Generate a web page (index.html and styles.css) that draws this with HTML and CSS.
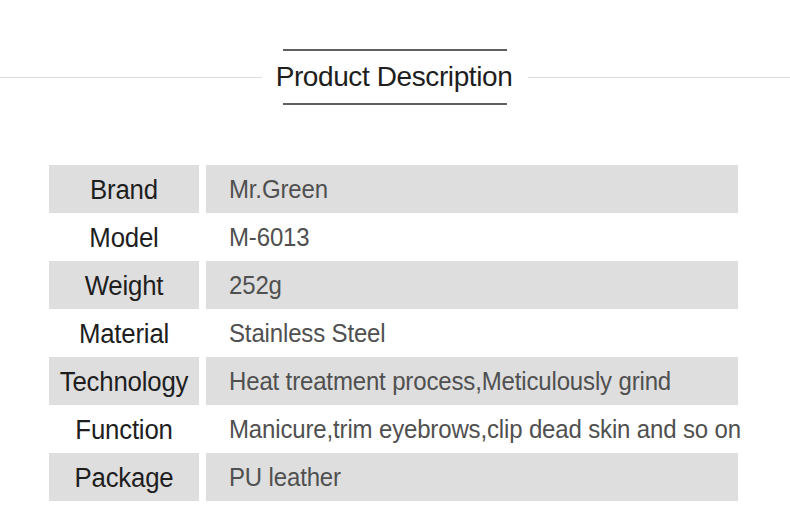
FILE: index.html
```html
<!DOCTYPE html>
<html>
<head>
<meta charset="utf-8">
<link rel="stylesheet" href="styles.css">
</head>
<body>
<header class="head">
  <div class="rule"></div>
  <div class="title-box">
    <div class="bar"></div>
    <h1 class="title">Product Description</h1>
    <div class="bar"></div>
  </div>
  <div class="rule"></div>
</header>
<div class="specs">
  <div class="row shade"><div class="label"><span class="txt">Brand</span></div><div class="value"><span class="txt">Mr.Green</span></div></div>
  <div class="row"><div class="label"><span class="txt">Model</span></div><div class="value"><span class="txt">M-6013</span></div></div>
  <div class="row shade"><div class="label"><span class="txt">Weight</span></div><div class="value"><span class="txt">252g</span></div></div>
  <div class="row"><div class="label"><span class="txt">Material</span></div><div class="value"><span class="txt">Stainless Steel</span></div></div>
  <div class="row shade"><div class="label"><span class="txt">Technology</span></div><div class="value"><span class="txt">Heat treatment process,Meticulously grind</span></div></div>
  <div class="row"><div class="label"><span class="txt">Function</span></div><div class="value"><span class="txt">Manicure,trim eyebrows,clip dead skin and so on</span></div></div>
  <div class="row shade"><div class="label"><span class="txt">Package</span></div><div class="value"><span class="txt">PU leather</span></div></div>
</div>
</body>
</html>
```
FILE: styles.css
```css
html, body {
  margin: 0;
  padding: 0;
  background: #fff;
  font-family: "Liberation Sans", Arial, sans-serif;
}
.head {
  display: flex;
  align-items: center;
  padding-top: 49px;
}
.rule {
  flex: 1;
  height: 1px;
  background: #dcdcdc;
}
.title-box {
  width: 266px;
  display: flex;
  flex-direction: column;
  align-items: center;
}
.bar {
  width: 224px;
  height: 2px;
  background: #606060;
}
.title {
  margin: 0;
  height: 52px;
  line-height: 52px;
  font-size: 28px;
  font-weight: normal;
  color: #1e1e1e;
  letter-spacing: -0.4px;
  position: relative;
  left: -1px;
}
.specs {
  margin: 60px 0 0 49px;
  display: flex;
  flex-direction: column;
}
.row {
  display: flex;
  gap: 7px;
  height: 48px;
}
.label, .value {
  display: flex;
  align-items: center;
}
.txt {
  display: inline-block;
  transform: scaleY(1.1);
}
.label {
  width: 150px;
  justify-content: center;
  font-size: 25.8px;
  color: #1e1e1e;
  letter-spacing: -0.2px;
}
.value {
  width: 532px;
  box-sizing: border-box;
  padding-left: 23px;
  font-size: 24px;
  color: #505050;
  letter-spacing: -0.15px;
  white-space: nowrap;
}
.shade .label, .shade .value {
  background: #dedede;
}
```
